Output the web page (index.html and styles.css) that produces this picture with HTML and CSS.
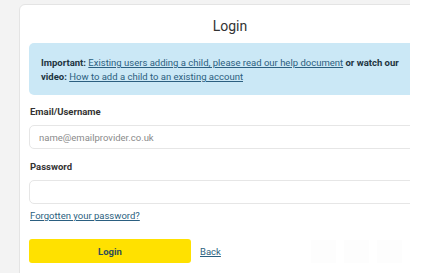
FILE: index.html
```html
<!DOCTYPE html>
<html lang="en">
<head>
  <meta charset="UTF-8">
  <meta name="viewport" content="width=device-width, initial-scale=1">
  <title>Login</title>
  <link rel="stylesheet" href="styles.css">
</head>

<body>
  <!-- Visible frame, clipped on the right -->
  <div class="frame">
    <div class="card">
      <h1>Login</h1>

      <!-- Notice for existing users -->
      <div class="notice">
        <strong>Important:</strong> <a href="#">Existing users adding a child, please read our help document</a>
        <strong>or watch our video:</strong> <a href="#">How to add a child to an existing account</a>
      </div>

      <form class="login-form">
        <label for="email">Email/Username</label>
        <input id="email" type="text" placeholder="name@emailprovider.co.uk">

        <label for="password">Password</label>
        <input id="password" type="password">

        <a class="forgot" href="#">Forgotten your password?</a>

        <div class="actions">
          <button type="button">Login</button>
          <a href="#">Back</a>
          <div class="ghosts">
            <span></span>
            <span></span>
            <span></span>
          </div>
        </div>
      </form>
    </div>
  </div>
</body>
</html>
```

FILE: styles.css
```css
/* Base reset */
* {
  margin: 0;
  padding: 0;
  box-sizing: border-box;
}
body {
  font-family: Roboto, 'Liberation Sans', sans-serif;
  background: #fff;
  color: #333;
}
a {
  color: #2b5f80;
}

/* Frame */
.frame {
  width: 410px;
  height: 273px;
  overflow: hidden;
  background: #f3f3f3;
  padding: 4px 0 0 19px;
}
.card {
  width: 422px;
  height: 290px;
  background: #fff;
  border: 1px solid #e4e4e4;
  border-radius: 6px;
  padding: 11px 9px 0;
}
.card h1 {
  font-size: 14px;
  font-weight: 400;
  line-height: 20px;
  text-align: center;
  color: #333;
  margin-bottom: 7px;
}

/* Notice */
.notice {
  background: #cbe8f6;
  border-radius: 5px;
  padding: 13px 12px 11px;
  font-size: 9.5px;
  line-height: 14px;
  color: #1d3440;
}
.notice a {
  color: #2b5f80;
}

/* Form */
.login-form {
  display: flex;
  flex-direction: column;
  align-items: flex-start;
}
.login-form label {
  font-size: 9.5px;
  font-weight: 700;
  line-height: 14px;
  margin: 10px 0 6px 1px;
}
.login-form label + input + label {
  margin-top: 11px;
}
.login-form input {
  width: 100%;
  height: 24px;
  border: 1px solid #e6e6e6;
  border-radius: 5px;
  padding: 0 9px;
  font-family: inherit;
  font-size: 9.5px;
  color: #333;
}
.login-form input::placeholder {
  color: #8a8a8a;
}
.forgot {
  font-size: 9.5px;
  line-height: 14px;
  margin: 5px 0 0 1px;
}

.actions {
  width: 100%;
  display: flex;
  align-items: center;
  gap: 9px;
  margin-top: 16px;
}
.actions button {
  width: 162px;
  height: 24px;
  border: none;
  border-radius: 3px;
  background: #ffe100;
  color: #2f4d5a;
  font-family: inherit;
  font-size: 9.5px;
  font-weight: 700;
}
.actions a {
  font-size: 9.5px;
}
.ghosts {
  margin-left: auto;
  margin-right: 29px;
  display: flex;
  gap: 8px;
}
.ghosts span {
  width: 25px;
  height: 23px;
  background: #fdfdfd;
}
```
